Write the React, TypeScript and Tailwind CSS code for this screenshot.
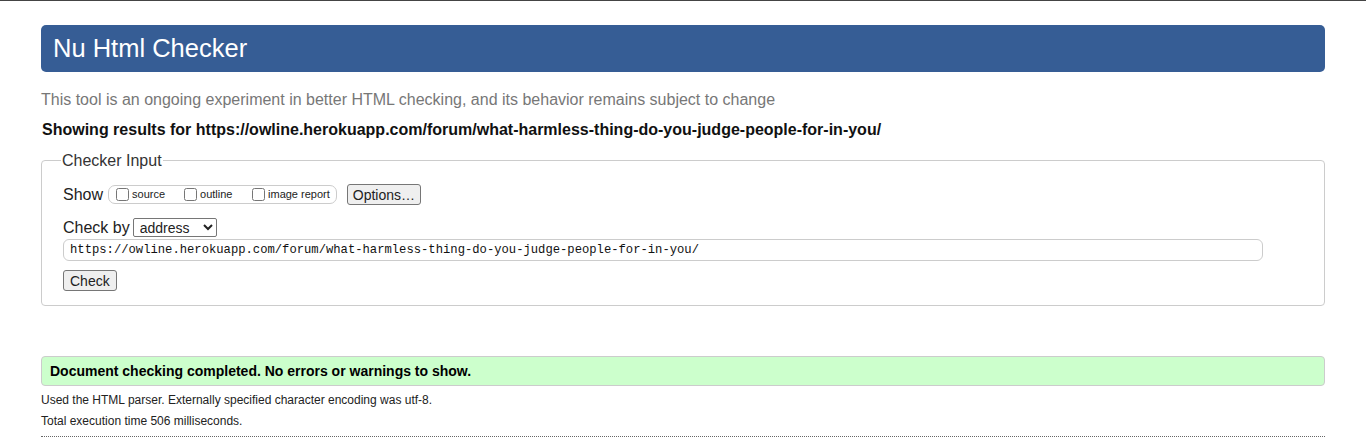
import { useState } from 'react';

const url = 'https://owline.herokuapp.com/forum/what-harmless-thing-do-you-judge-people-for-in-you/';

const showOptions = ['source', 'outline', 'image report'];

export default function App() {
  const [checked, setChecked] = useState<Record<string, boolean>>({});
  const [by, setBy] = useState('address');
  const [doc, setDoc] = useState(url);

  return (
    <div className="min-h-screen bg-white border-t border-[#444] font-['Liberation_Sans',Arial,sans-serif] text-[#222]">
      <div className="mx-[41px] pt-[24px]">
        <div className="bg-[#365d95] rounded-[5px] h-[47px] flex items-center px-[12px]">
          <h1 className="text-white text-[25.5px] leading-none">Nu Html Checker</h1>
        </div>

        <p className="mt-[18px] text-[16px] leading-[19px] text-[#777]">
          This tool is an ongoing experiment in better HTML checking, and its behavior remains subject to change
        </p>

        <p className="mt-[11px] ml-px text-[16px] leading-[19px] font-bold text-[#111]">
          Showing results for {url}
        </p>

        <fieldset className="mt-[12px] border border-[#ccc] rounded-[4px] px-[21px] pb-[14px]">
          <legend className="text-[16px] leading-[19px] px-px text-[#333] -ml-[2px]">Checker Input</legend>

          <div className="flex items-center mt-[14px] h-[21px]">
            <span className="text-[16px] mr-[5px]">Show</span>
            <div className="flex items-center h-[19px] border border-[#ccc] rounded-[7px] pl-[7px] pr-[6px]">
              {showOptions.map((o, i) => (
                <label
                  key={o}
                  className={`flex items-center text-[11px] ${i < showOptions.length - 1 ? 'w-[68px]' : ''}`}
                >
                  <input
                    type="checkbox"
                    checked={!!checked[o]}
                    onChange={() => setChecked({ ...checked, [o]: !checked[o] })}
                    className="m-0 mr-[3px] w-[13px] h-[13px]"
                  />
                  {o}
                </label>
              ))}
            </div>
            <button className="ml-[10px] h-[21px] px-[5px] text-[14px] bg-[#efefef] border border-[#767676] rounded-[3px]">
              Options…
            </button>
          </div>

          <div className="flex items-center mt-[13px] h-[19px]">
            <span className="text-[16px] mr-[3px]">Check by</span>
            <select
              value={by}
              onChange={(e) => setBy(e.target.value)}
              className="h-[19px] w-[84px] text-[14px] border border-[#767676] rounded-[2px] pl-[2px] bg-white"
            >
              <option value="address">address</option>
              <option value="file">file upload</option>
              <option value="textarea">text input</option>
            </select>
          </div>

          <input
            value={doc}
            onChange={(e) => setDoc(e.target.value)}
            className="mt-[2px] block w-[1200px] h-[22px] border border-[#ccc] rounded-[6px] px-[6px] text-[12.2px] font-['Liberation_Mono',Consolas,monospace] text-[#111] outline-none"
          />

          <button className="mt-[9px] block h-[21px] px-[6px] text-[14px] bg-[#efefef] border border-[#767676] rounded-[3px]">
            Check
          </button>
        </fieldset>

        <div className="mt-[50px] h-[30px] bg-[#ccffcc] border border-[#ccc] rounded-[4px] flex items-center px-[8px]">
          <p className="text-[14px] font-bold text-black">Document checking completed. No errors or warnings to show.</p>
        </div>

        <p className="mt-[7px] text-[12px] leading-[14px]">Used the HTML parser. Externally specified character encoding was utf-8.</p>
        <p className="mt-[7px] text-[12px] leading-[14px]">Total execution time 506 milliseconds.</p>
        <div className="mt-[8px] border-t border-dotted border-[#666]" />
      </div>
    </div>
  );
}
